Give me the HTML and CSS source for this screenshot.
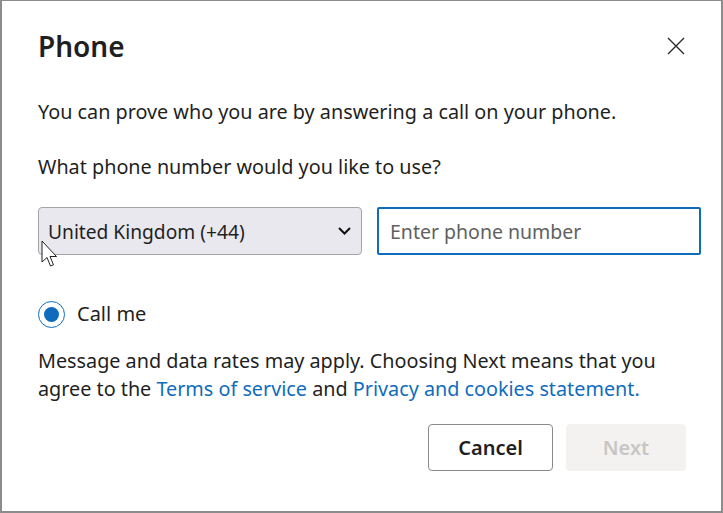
FILE: index.html
```html
<!DOCTYPE html>
<html>
  <head>
    <title>Phone</title>
    <meta charset="UTF-8" />
    <meta name="viewport" content="width=device-width, initial-scale=1.0" />
    <link rel="stylesheet" href="styles.css">
  </head>
  <body>
    <div class="dialog">
      <div class="dialog-head">
        <h1>Phone</h1>
        <button class="close" aria-label="Close">
          <svg width="18" height="18" viewBox="0 0 18 18">
            <path d="M1 1 L17 17 M17 1 L1 17" stroke="#2b2b2b" stroke-width="1.4" fill="none" />
          </svg>
        </button>
      </div>

      <p class="intro">You can prove who you are by answering a call on your phone.</p>
      <p class="ask">What phone number would you like to use?</p>

      <div class="phone-row">
        <div class="country">
          <span>United Kingdom (+44)</span>
          <svg width="13" height="8" viewBox="0 0 13 8">
            <path d="M1 1 L6.5 6.5 L12 1" stroke="#111" stroke-width="2" fill="none" />
          </svg>
        </div>
        <input class="number" type="text" placeholder="Enter phone number" />
      </div>

      <label class="radio">
        <span class="dot"></span>
        Call me
      </label>

      <p class="terms">
        Message and data rates may apply. Choosing Next means that you<br>
        agree to the <a href="#">Terms of service</a> and <a href="#">Privacy and cookies statement.</a>
      </p>

      <div class="actions">
        <button class="btn">Cancel</button>
        <button class="btn next" disabled>Next</button>
      </div>

      <!-- mouse pointer sitting over the country box -->
      <svg class="cursor" width="20" height="29" viewBox="0 0 20 29">
        <path d="M1 1 L1 22 L6 17.5 L9.5 26 L12.5 24.8 L9 16.5 L15.5 16.5 Z" fill="#fff" stroke="#222" stroke-width="1" stroke-linejoin="miter" />
      </svg>
    </div>
  </body>
</html>
```

FILE: styles.css
```css
* {
  box-sizing: border-box;
}
body {
  margin: 0;
  font-family: "Noto Sans", "Open Sans", sans-serif;
  color: #1f1f1f;
}
.dialog {
  position: relative;
  width: 723px;
  height: 513px;
  border: 2px solid #8c8c8c;
  border-top-width: 1px;
  padding: 27px 20px 0 36px;
  background: #fff;
}
.dialog-head {
  display: flex;
  justify-content: space-between;
  align-items: center;
}
h1 {
  margin: 0;
  font-size: 28px;
  line-height: 36px;
  font-weight: 600;
}
.close {
  border: none;
  background: none;
  padding: 0;
  margin-right: 16px;
  width: 18px;
  height: 18px;
  display: flex;
  cursor: pointer;
}
p {
  margin: 0;
  font-size: 19.8px;
  line-height: 28px;
}
.intro {
  margin-top: 34px;
}
.ask {
  margin-top: 27px;
}
.phone-row {
  display: grid;
  grid-template-columns: 1fr 1fr;
  gap: 15px;
  margin-top: 26px;
}
.country {
  height: 48px;
  background: #e9e8ee;
  border: 1px solid #a3a3a8;
  border-radius: 4px;
  display: flex;
  align-items: center;
  justify-content: space-between;
  padding: 0 10px 0 9px;
  font-size: 19.2px;
}
.number {
  height: 48px;
  border: 2px solid #0f6cbd;
  border-radius: 2px;
  padding: 0 11px;
  font-family: inherit;
  font-size: 19.5px;
  color: #1f1f1f;
  outline: none;
}
.number::placeholder {
  color: #616161;
}
.radio {
  display: flex;
  align-items: center;
  gap: 12px;
  margin-top: 45px;
  font-size: 20px;
  line-height: 28px;
}
.dot {
  width: 27px;
  height: 27px;
  border: 1.5px solid #0f6cbd;
  border-radius: 50%;
  display: flex;
  align-items: center;
  justify-content: center;
}
.dot::after {
  content: "";
  width: 15px;
  height: 15px;
  border-radius: 50%;
  background: #0f6cbd;
}
.terms {
  margin-top: 19px;
}
.terms a {
  color: #0f6cbd;
  text-decoration: none;
}
.actions {
  display: flex;
  justify-content: flex-end;
  gap: 13px;
  margin-top: 21px;
  padding-right: 15px;
}
.btn {
  height: 47px;
  width: 125px;
  border: 1px solid #8a8a8a;
  border-radius: 4px;
  background: #fff;
  font-family: inherit;
  font-size: 20px;
  font-weight: 600;
  color: #1f1f1f;
}
.btn.next {
  width: 120px;
  border-color: #f3f2f1;
  background: #f3f2f1;
  color: #c8c6c4;
}
.cursor {
  position: absolute;
  left: 39px;
  top: 239px;
}
```
